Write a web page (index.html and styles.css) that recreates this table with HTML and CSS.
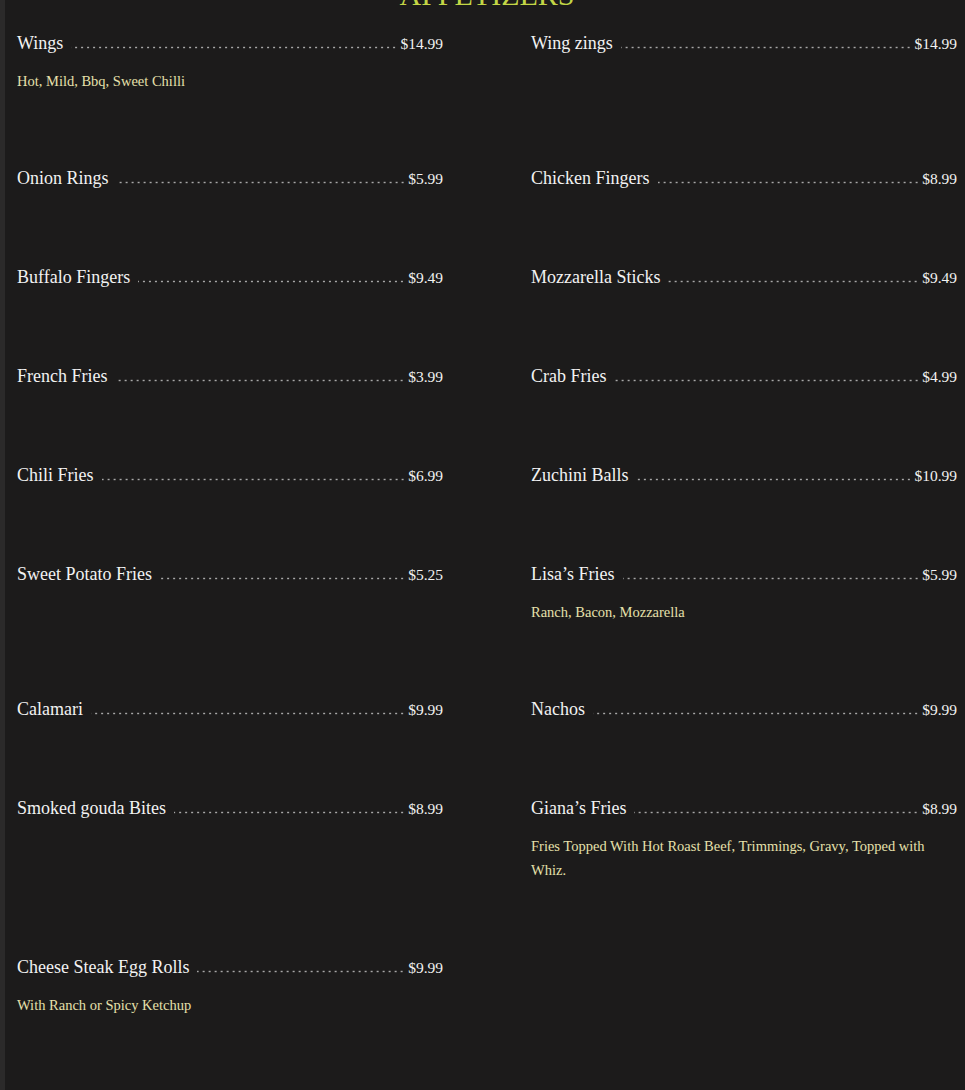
FILE: index.html
```html
<!DOCTYPE html>
<html>
<head>
<meta charset="utf-8">
<link rel="stylesheet" href="styles.css">
</head>
<body>
<main class="menu">
  <h2 class="section-title">APPETIZERS</h2>
  <div class="items">
    <div class="item">
      <div class="item-head"><span class="name">Wings</span><span class="dots"></span><span class="price">$14.99</span></div>
      <p class="desc">Hot, Mild, Bbq, Sweet Chilli</p>
    </div>
    <div class="item">
      <div class="item-head"><span class="name">Wing zings</span><span class="dots"></span><span class="price">$14.99</span></div>
    </div>
    <div class="item">
      <div class="item-head"><span class="name">Onion Rings</span><span class="dots"></span><span class="price">$5.99</span></div>
    </div>
    <div class="item">
      <div class="item-head"><span class="name">Chicken Fingers</span><span class="dots"></span><span class="price">$8.99</span></div>
    </div>
    <div class="item">
      <div class="item-head"><span class="name">Buffalo Fingers</span><span class="dots"></span><span class="price">$9.49</span></div>
    </div>
    <div class="item">
      <div class="item-head"><span class="name">Mozzarella Sticks</span><span class="dots"></span><span class="price">$9.49</span></div>
    </div>
    <div class="item">
      <div class="item-head"><span class="name">French Fries</span><span class="dots"></span><span class="price">$3.99</span></div>
    </div>
    <div class="item">
      <div class="item-head"><span class="name">Crab Fries</span><span class="dots"></span><span class="price">$4.99</span></div>
    </div>
    <div class="item">
      <div class="item-head"><span class="name">Chili Fries</span><span class="dots"></span><span class="price">$6.99</span></div>
    </div>
    <div class="item">
      <div class="item-head"><span class="name">Zuchini Balls</span><span class="dots"></span><span class="price">$10.99</span></div>
    </div>
    <div class="item">
      <div class="item-head"><span class="name">Sweet Potato Fries</span><span class="dots"></span><span class="price">$5.25</span></div>
    </div>
    <div class="item">
      <div class="item-head"><span class="name">Lisa’s Fries</span><span class="dots"></span><span class="price">$5.99</span></div>
      <p class="desc">Ranch, Bacon, Mozzarella</p>
    </div>
    <div class="item">
      <div class="item-head"><span class="name">Calamari</span><span class="dots"></span><span class="price">$9.99</span></div>
    </div>
    <div class="item">
      <div class="item-head"><span class="name">Nachos</span><span class="dots"></span><span class="price">$9.99</span></div>
    </div>
    <div class="item">
      <div class="item-head"><span class="name">Smoked gouda Bites</span><span class="dots"></span><span class="price">$8.99</span></div>
    </div>
    <div class="item">
      <div class="item-head"><span class="name">Giana’s Fries</span><span class="dots"></span><span class="price">$8.99</span></div>
      <p class="desc">Fries Topped With Hot Roast Beef, Trimmings, Gravy, Topped with Whiz.</p>
    </div>
    <div class="item">
      <div class="item-head"><span class="name">Cheese Steak Egg Rolls</span><span class="dots"></span><span class="price">$9.99</span></div>
      <p class="desc">With Ranch or Spicy Ketchup</p>
    </div>
  </div>
</main>
</body>
</html>
```

FILE: styles.css
```css
html, body {
  margin: 0;
  padding: 0;
}

body {
  background: #1c1b1b;
  border-left: 5px solid #2b2a2a;
  font-family: "Liberation Serif", "Times New Roman", serif;
  color: #f2f2f2;
  overflow: hidden;
  height: 1090px;
  box-sizing: border-box;
}

.menu {
  padding: 0 8px 0 12px;
}

.section-title {
  margin: -20px 0 20px;
  font-size: 30px;
  line-height: 30px;
  font-weight: normal;
  text-align: center;
  color: #c3d646;
  width: 940px;
}

.items {
  display: grid;
  grid-template-columns: 426px 426px;
  column-gap: 88px;
}

.item {
  padding-bottom: 72px;
}

.item-head {
  display: flex;
  align-items: baseline;
  height: 27px;
  line-height: 27px;
}

.name {
  font-size: 18px;
  white-space: nowrap;
}

.dots {
  flex: 1;
  height: 3px;
  margin: 0 3px 0 8px;
  background-image: radial-gradient(circle, #a8a8a8 0.8px, transparent 1.2px);
  background-size: 6px 3px;
  background-repeat: repeat-x;
  background-position: right bottom;
}

.price {
  font-size: 15.5px;
  white-space: nowrap;
}

.desc {
  margin: 12px 0 0;
  font-size: 14.5px;
  line-height: 24px;
  color: #e6e0ab;
}
```
